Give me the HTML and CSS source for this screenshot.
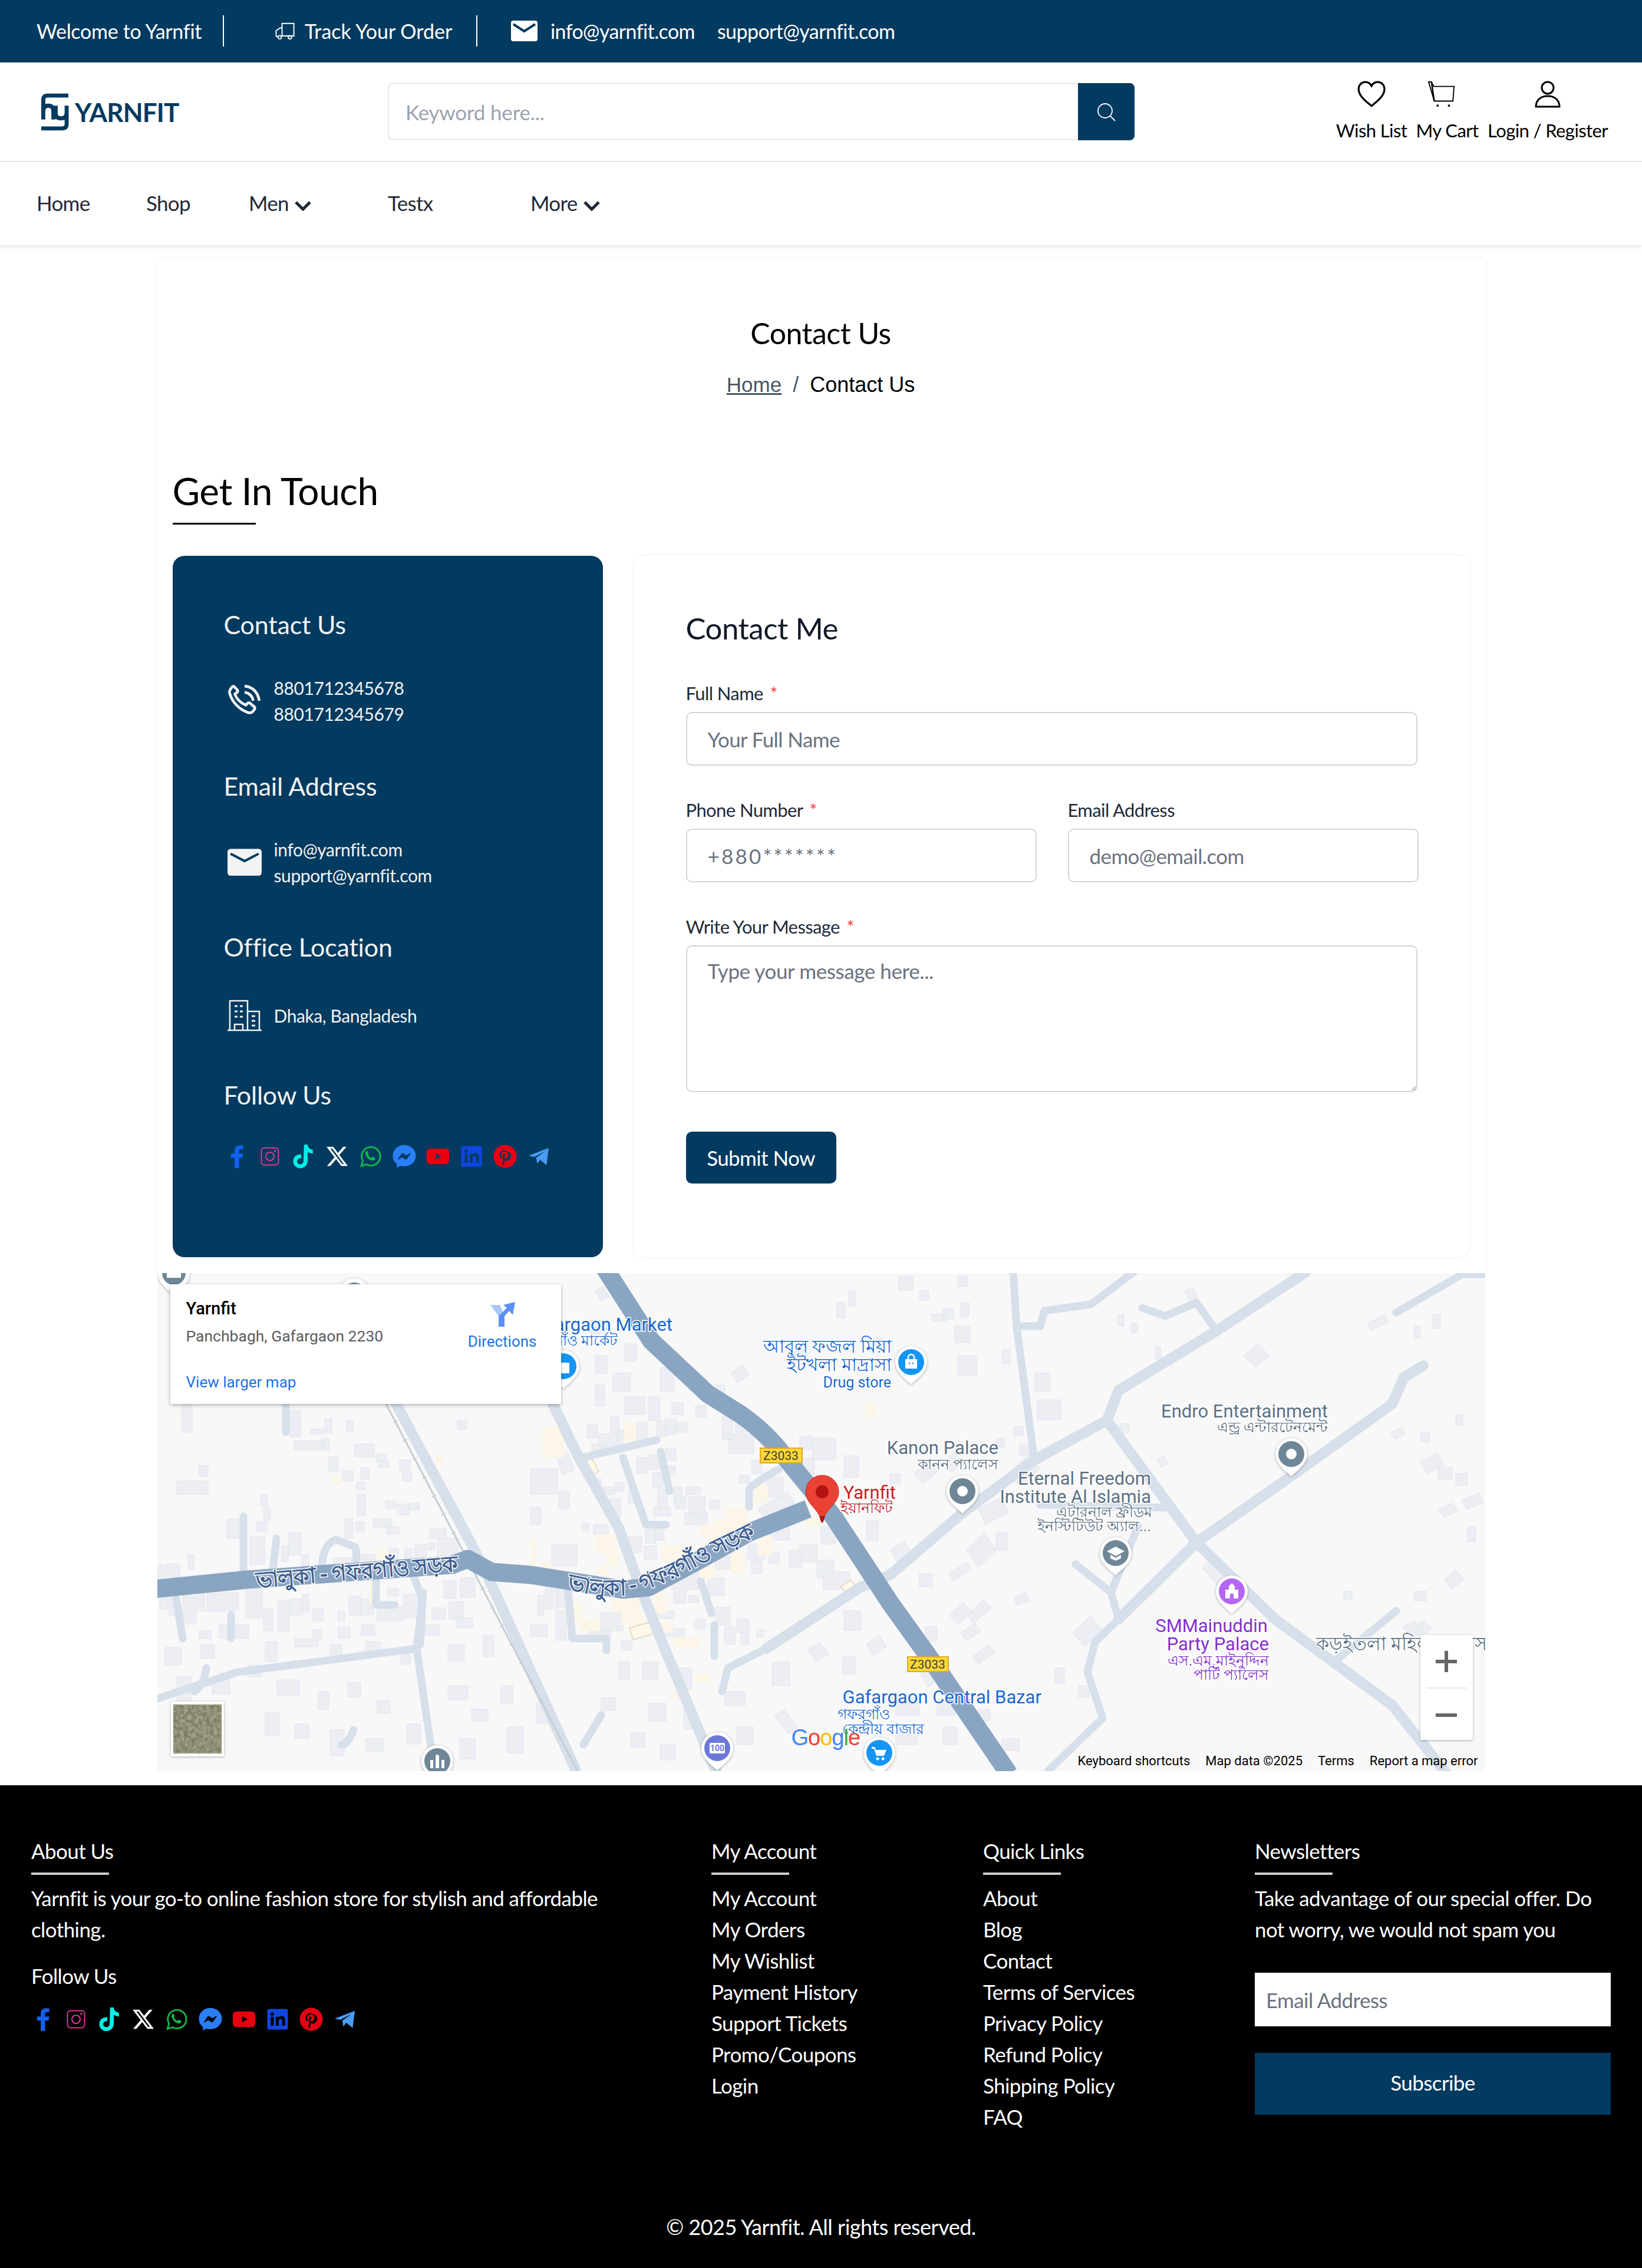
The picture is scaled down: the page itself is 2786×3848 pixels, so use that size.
FILE: index.html
```html
<!DOCTYPE html>
<html lang="en">
<head>
  <meta charset="UTF-8">
  <title>Contact Us - Yarnfit</title>
  <link rel="stylesheet" href="styles.css">
</head>
<body>

<!-- social icon set, used in the contact card and in the footer -->
<svg class="defs" aria-hidden="true">
  <symbol id="i-fb" viewBox="0 0 24 24"><path fill="#1261f0" d="M14.700 24V13.400h3.600l.55-4.200h-4.150V6.600c0-1.200.35-2 2.050-2h2.200V.9C18.500.85 17.200.7 15.700.7 12.500.7 10.300 2.600 10.300 6.200v3H6.500v4.200h3.800V24z"/></symbol>
  <symbol id="i-ig" viewBox="0 0 24 24"><g fill="none" stroke="#e0359b" stroke-width="1.200"><rect x="3.300" y="3.300" width="17.400" height="17.400" rx="3"/><circle cx="12" cy="12" r="4.200"/></g><circle cx="17.400" cy="6.600" r="1.100" fill="#e0359b"/></symbol>
  <symbol id="i-tt" viewBox="0 0 24 24"><path fill="#00f0e8" d="M12.500 0h3.700c.2 1.500.7 2.700 1.500 3.600.9 1 2.100 1.500 3.800 1.600v3.900c-2.100 0-3.900-.6-5.300-1.700v8.700c0 4.500-3.100 7.900-7.500 7.900C4.500 24 1.500 21 1.500 17c0-4.400 3.700-7.500 8.100-7v4c-2.200-.4-4.100 1-4.100 3 0 1.800 1.400 3 3.100 3 2 0 3.400-1.500 3.400-3.500z"/></symbol>
  <symbol id="i-x" viewBox="0 0 24 24"><path fill="#fff" d="M18.200 2.200h3.300l-7.200 8.300 8.500 11.200h-6.600l-5.200-6.800L5 21.800H1.700l7.700-8.900L1.300 2.200h6.800l4.700 6.200zm-1.100 17.600h1.800L7.100 4.100h-2z"/></symbol>
  <symbol id="i-wa" viewBox="0 0 24 24"><path fill="none" stroke="#12b84c" stroke-width="1.700" d="M2.500 21.800l1.500-5.400a9.400 9.400 0 1 1 3.700 3.700z"/><path fill="#12b84c" d="M9 7c-.3-.6-1-.6-1.500-.2-1 1-1.200 2.300-.5 3.800 1.100 2.400 3.300 4.600 6 5.500 1.500.5 2.800 0 3.500-1.200.3-.6.2-1.100-.3-1.400l-1.800-.9c-.4-.2-.8-.1-1 .3l-.6.7c-1.700-.6-3-1.800-3.800-3.400l.6-.7c.2-.3.3-.6.1-1z"/></symbol>
  <symbol id="i-ms" viewBox="0 0 24 24"><path fill="#2a7ff8" fill-rule="evenodd" d="M12 .5C5.500.5.300 5.300.300 11.400c0 3.300 1.500 6.200 4 8.200v3.900l3.600-2c1.300.4 2.600.6 4.100.6 6.500 0 11.700-4.700 11.700-10.700S18.500.5 12 .5zM5.300 14.800l3.900-5.600c.4-.6 1.200-.7 1.700-.3l3 2.100 4-2.400c.3-.2.7.2.500.5l-3.800 5.600c-.4.600-1.200.7-1.700.3l-3-2.100-4.100 2.400c-.3.200-.7-.2-.5-.5z"/></symbol>
  <symbol id="i-yt" viewBox="0 0 24 24"><path fill="#e8000e" fill-rule="evenodd" d="M4.500 4h15a4 4 0 0 1 4 4v8a4 4 0 0 1-4 4h-15a4 4 0 0 1-4-4V8a4 4 0 0 1 4-4zM10 8.800v6.400l5.500-3.200z"/></symbol>
  <symbol id="i-in" viewBox="0 0 24 24"><path fill="#0f46e0" fill-rule="evenodd" d="M3.500 1.500h17a2 2 0 0 1 2 2v17a2 2 0 0 1-2 2h-17a2 2 0 0 1-2-2v-17a2 2 0 0 1 2-2zM5 9.500v9h3v-9zM6.500 5a1.700 1.700 0 1 0 0 3.400 1.700 1.700 0 0 0 0-3.400zM10.200 9.500v9h3v-5c0-1.300.7-2 1.800-2s1.600.8 1.600 2v5h3v-5.500c0-2.900-1.500-4.300-3.700-4.300-1.300 0-2.300.6-2.800 1.400V9.500z"/></symbol>
  <symbol id="i-pt" viewBox="0 0 24 24"><path fill="#e60014" fill-rule="evenodd" d="M12 .3a11.700 11.700 0 1 0 0 23.400 11.700 11.700 0 0 0 0-23.400zM12.300 5.500c-3.700 0-6 2.500-6 5.200 0 1.300.7 2.900 1.800 3.400.3.100.4 0 .5-.3l.2-.8c0-.2 0-.3-.2-.5-.4-.5-.6-1.100-.6-1.800 0-1.900 1.500-3.600 3.900-3.600 2.100 0 3.300 1.300 3.300 3 0 2.300-1 4.200-2.500 4.200-.8 0-1.500-.7-1.300-1.500.3-1 .7-2 .7-2.700 0-.6-.3-1.100-1-1.100-.8 0-1.500.8-1.500 2 0 .7.2 1.200.2 1.200L9.500 18c-.1.800-.1 2.400 0 3.500 1 .2 1.300-1.700 1.800-3.900l.5-2c.3.500 1.100.9 1.900.9 2.500 0 4.300-2.400 4.300-5.300 0-2.400-2.100-4.700-5.700-4.700z"/></symbol>
  <symbol id="i-tg" viewBox="0 0 24 24"><path fill="#4a9df5" d="M1.800 11.300L22.200 3.400 20 20.800 13.500 15.500 10.500 19.500 9.500 13.400 19 6.500 7.500 12.600z"/></symbol>
</svg>

<div class="topbar">
  <span class="top-welcome">Welcome to Yarnfit</span>
  <span class="top-sep"></span>
  <svg class="ico-truck" viewBox="0 0 34 34" fill="none" stroke="#fff" stroke-width="1.700"><path d="M4 26V17l6-4h3V6h18v19H13M4 26h3m6-1H12"/><path d="M13 13v12"/><circle cx="9.500" cy="27" r="2.500"/><circle cx="25" cy="27" r="2.500"/><path d="M15 25h7"/></svg>
  <span class="top-track">Track Your Order</span>
  <span class="top-sep"></span>
  <svg class="ico-mail" viewBox="0 0 45 35"><rect width="45" height="35" rx="4" fill="#fff"/><path d="M4 6l18.500 12L41 6" fill="none" stroke="#033a5f" stroke-width="4"/></svg>
  <span class="top-info">info@yarnfit.com</span>
  <span class="top-info">support@yarnfit.com</span>
</div>

<header class="header">
  <a class="logo">
    <svg class="logo-mark" viewBox="0 0 48 64" fill="none" stroke="#033a5f" stroke-width="7"><path d="M47 3.500H11Q3.500 3.500 3.500 11V45M3.500 31Q3.500 21 12 21 21 21 21 31V45M25 21V34Q25 43 34 43 44 43 44 34M44 21V53Q44 60.500 36 60.500H0"/></svg>
    <span class="logo-text">YARNFIT</span>
  </a>
  <form class="search">
    <input type="text" placeholder="Keyword here...">
    <button type="button" aria-label="Search">
      <svg viewBox="0 0 34 34" fill="none" stroke="#fff" stroke-width="1.800"><circle cx="15" cy="15" r="12"/><path d="M24 24l8 8"/></svg>
    </button>
  </form>
  <div class="user-links">
    <a class="user-link link-wish">
      <svg viewBox="0 0 44 42" fill="none" stroke="#000" stroke-width="3"><path d="M22 39C8 28 2 21 2 13 2 6 7 2 12.500 2 17 2 20 4.500 22 8 24 4.500 27 2 31.500 2 37 2 42 6 42 13 42 21 36 28 22 39z"/></svg>
      <span>Wish List</span>
    </a>
    <a class="user-link link-cart">
      <svg viewBox="0 0 48 48" fill="none" stroke="#000" stroke-width="2"><path d="M1 2h5l4 8h36l-2 26H11Z"/><path d="M6 2l5 34" stroke-width="2.500"/><circle cx="17" cy="44" r="2" fill="#000" stroke="none"/><circle cx="37" cy="44" r="2" fill="#000" stroke="none"/></svg>
      <span>My Cart</span>
    </a>
    <a class="user-link link-login">
      <svg viewBox="0 0 44 46" fill="none" stroke="#000" stroke-width="3"><circle cx="22" cy="12" r="10"/><path d="M2 44c0-11 8-18 20-18s20 7 20 18z"/></svg>
      <span>Login / Register</span>
    </a>
  </div>
</header>

<nav class="nav">
  <a class="nav-home">Home</a>
  <a class="nav-shop">Shop</a>
  <a class="nav-men">Men <svg viewBox="0 0 28 18" fill="none" stroke="#1f2937" stroke-width="5"><path d="M2 3l12 12L26 3"/></svg></a>
  <a class="nav-testx">Testx</a>
  <a class="nav-more">More <svg viewBox="0 0 28 18" fill="none" stroke="#1f2937" stroke-width="5"><path d="M2 3l12 12L26 3"/></svg></a>
</nav>

<main class="page">
  <section class="card">
    <h1 class="page-title">Contact Us</h1>
    <div class="crumbs"><a>Home</a><i>/</i><span>Contact Us</span></div>

    <h2 class="touch-title">Get In Touch</h2>
    <div class="touch-line"></div>

    <div class="contact-row">
      <aside class="info">
        <h3>Contact Us</h3>
        <div class="info-item">
          <svg viewBox="0 0 54 54" fill="none" stroke="#f1f3f5" stroke-width="4.500"><path d="M4 8c-2 2-2 5-1 8 4 13 15 25 29 30 3 1 6 1 8-1l3-4c1-1 1-3 0-4l-7-6c-1-1-3-1-4 0l-3 3C21 31 14 24 11 16l4-3c1-1 1-2 0-4L10 4C9 3 7 3 6 5z" stroke-linejoin="round"/><path d="M27 3c13 1 22 10 24 24M27 13c7 1 13 6 14 14"/></svg>
          <p>8801712345678<br>8801712345679</p>
        </div>
        <h3 class="info-email">Email Address</h3>
        <div class="info-item">
          <svg viewBox="0 0 56 44"><rect width="56" height="44" rx="5" fill="#f1f3f5"/><path d="M5 8l23 12L51 8" fill="none" stroke="#033a5f" stroke-width="4"/></svg>
          <p>info@yarnfit.com<br>support@yarnfit.com</p>
        </div>
        <h3 class="info-office">Office Location</h3>
        <div class="info-item info-single">
          <svg viewBox="0 0 58 54" fill="none" stroke="#f1f3f5" stroke-width="2.500"><path d="M0 52h58M4 52V2h30v50M34 20h20v32"/><path d="M12 52V42h14v10"/><path d="M12 11h5M21 11h5M12 20h5M21 20h5M12 29h5M21 29h5M41 28h6M41 36h6M41 44h6" stroke-width="3"/></svg>
          <p>Dhaka, Bangladesh</p>
        </div>
        <h3 class="info-follow">Follow Us</h3>
        <div class="socials">
          <svg><use href="#i-fb"/></svg><svg><use href="#i-ig"/></svg><svg><use href="#i-tt"/></svg><svg><use href="#i-x"/></svg><svg><use href="#i-wa"/></svg><svg><use href="#i-ms"/></svg><svg><use href="#i-yt"/></svg><svg><use href="#i-in"/></svg><svg><use href="#i-pt"/></svg><svg><use href="#i-tg"/></svg>
        </div>
      </aside>

      <form class="contact-form">
        <h3>Contact Me</h3>
        <div class="field">
          <label>Full Name <b>*</b></label>
          <input type="text" placeholder="Your Full Name">
        </div>
        <div class="field-row">
          <div class="field">
            <label>Phone Number <b>*</b></label>
            <input class="input-phone" type="text" placeholder="+880*******">
          </div>
          <div class="field">
            <label>Email Address</label>
            <input type="text" placeholder="demo@email.com">
          </div>
        </div>
        <div class="field">
          <label>Write Your Message <b>*</b></label>
          <textarea placeholder="Type your message here..."></textarea>
        </div>
        <button type="button" class="submit">Submit Now</button>
      </form>
    </div>
  </section>

  <section class="map">
    <svg class="map-canvas" viewBox="267 2160 2253 845">
      <defs>
        <filter id="sat"><feTurbulence type="fractalNoise" baseFrequency="0.16" numOctaves="3" seed="4"/><feColorMatrix values="0 0 0 0 .42  0 0 0 0 .40  0 0 0 0 .30  1.600 0 0 0 -.35"/></filter>
        <path id="road-a" d="M435 2694L770 2666"/>
        <path id="road-b" d="M962 2696Q1040 2716 1090 2699T1200 2648L1285 2606"/>
        <path id="pin-shape" fill="#fff" d="M0 38C-6 31-27 19-27 0A27 27 0 0 1 27 0C27 19 6 31 0 38z"/>
      </defs>
      <rect x="267" y="2160" width="2253" height="845" fill="#f8f8f8"/>

      <!-- buildings, west of the marker -->
      <path class="bld" d="M308 2383h18v47h-18zM492 2393h18v45h-18zM551 2407h12v25h-12zM587 2410h12v18h-12zM526 2425h23v8h-23zM499 2445h50v15h-50zM546 2440h12v20h-12zM601 2450h34v22h-34zM558 2472h16v25h-16zM337 2487h16v18h-16zM299 2513h54v22h-54zM581 2495h18v18h-18zM612 2490h14v20h-14zM604 2515h16v12h-16zM606 2535h14v37h-14zM442 2537h12v17h-12zM447 2557h12v23h-12zM385 2577h20v33h-20zM435 2582h18v17h-18zM654 2547h18v12h-18zM674 2552h20v18h-20zM696 2550h16v12h-16zM678 2477h18v20h-18zM683 2498h16v15h-16zM638 2467h18v13h-18zM642 2478h18v12h-18zM776 2410h16v15h-16zM585 2577h14v33h-14zM604 2582h14v17h-14zM633 2577h32v15h-32zM656 2590h21v13h-21zM729 2593h28v17h-28zM424 2607h25v47h-25zM490 2600h21v38h-21zM478 2622h12v27h-12zM512 2638h12v20h-12zM565 2643h32v13h-32zM612 2637h25v10h-25zM660 2627h16v20h-16zM687 2627h12v20h-12zM703 2620h20v23h-20zM726 2618h12v12h-12zM742 2610h36v33h-36zM267 2655h11v22h-11zM281 2653h24v23h-24zM319 2638h10v25h-10z"/>
      <path class="bld" d="M271 2710h14v20h-14zM287 2708h12v33h-12zM310 2708h23v47h-23zM335 2705h12v28h-12zM351 2703h54v30h-54zM417 2695h28v50h-28zM447 2730h16v37h-16zM471 2715h20v53h-20zM492 2713h21v27h-21zM513 2705h11v30h-11zM530 2730h18v20h-18zM574 2733h11v18h-11zM592 2708h20v33h-20zM613 2713h21v27h-21zM640 2727h43v23h-43zM658 2695h18v13h-18zM685 2705h25v40h-25zM733 2728h23v20h-23zM762 2718h25v30h-25zM774 2745h28v17h-28zM753 2682h21v30h-21zM781 2677h25v33h-25zM721 2757h25v17h-25zM613 2757h23v17h-23zM530 2765h16v15h-16zM338 2767h20v13h-20zM372 2757h50v23h-50zM574 2760h20v20h-20zM280 2795h28v30h-28zM340 2790h24v24h-24zM450 2785h20v34h-20zM500 2780h40v14h-40zM560 2790h20v28h-20zM620 2785h26v20h-26zM680 2800h16v24h-16zM760 2790h28v28h-28zM820 2775h18v36h-18zM300 2845h24v44h-24zM360 2850h30v24h-30zM420 2825h24v20h-24zM470 2850h38v26h-38zM540 2870h18v30h-18zM590 2855h22v24h-22zM640 2885h22v22h-22zM450 2905h24v40h-24zM500 2925h24v24h-24zM560 2935h24v44h-24zM620 2950h30v22h-30zM690 2925h24v34h-24zM760 2860h34v24h-34zM800 2900h28v20h-28zM850 2860h20v30h-20zM780 2950h26v34h-26zM860 2930h28v44h-28zM910 2890h20v34h-20z"/>
      <!-- buildings, around the junction -->
      <path class="bld" d="M900 2492h46v43h-46zM943 2472l20-8 12 30-20 8zM948 2530h18v30h-18zM900 2557h18v30h-18zM936 2620h43v37h-43zM1007 2510h14v20h-14zM1023 2523h20v13h-20zM1043 2515h16v15h-16zM996 2417h18v23h-18zM1016 2433h18v23h-18zM1036 2403h14v50h-14zM1046 2427h18v33h-18zM1080 2413h18v33h-18zM1114 2410h18v27h-18zM1129 2407h18v27h-18zM1148 2413h18v17h-18zM1004 2450h21v15h-21zM1080 2473h18v27h-18zM1100 2468h20v25h-20zM1129 2458h18v20h-18zM1130 2487h16v15h-16zM1107 2498h18v27h-18zM1116 2528h16v30h-16zM1066 2527h14v23h-14zM1143 2523h14v27h-14zM1146 2540h18v20h-18zM1164 2523h25v13h-25zM1168 2540h29v33h-29zM1161 2567h39v20h-39zM1204 2545h16v15h-16zM1109 2557h29v15h-29zM1032 2543h21v33h-21zM1007 2587h25v17h-25zM987 2585h12v12h-12zM1064 2607h25v27h-25zM1095 2595h18v23h-18zM1111 2590h16v23h-16zM1093 2623h21v23h-21zM1300 2507h29v33h-29zM1286 2560l50-30 14 22-50 30zM1275 2477h18v23h-18zM1254 2503h18v13h-18zM1236 2433h43v33h-43zM1225 2403h18v40h-18zM1248 2410h21v20h-21zM1357 2437h21v23h-21zM1379 2440h39v37h-39zM1350 2473h32v30h-32zM1432 2470h25v37h-25zM1214 2640h25v23h-25zM1268 2620h29v27h-29zM1275 2647h18v23h-18zM1304 2633h18v20h-18zM1307 2590h32v23h-32zM1339 2630h21v30h-21zM1357 2620h29v30h-29zM1386 2647h29v30h-29zM1393 2590h25v30h-25zM1396 2667h46v30h-46zM1432 2733h29v33h-29zM1139 2667h46v30h-46zM1143 2700h21v20h-21zM1168 2707h18v12h-18zM1179 2747h18v17h-18zM1200 2677h29v30h-29zM1214 2727h25v30h-25zM1250 2747h21v23h-21zM1284 2765h12v12h-12zM1229 2760h18v30h-18zM1257 2770h14v20h-14zM925 2687h21v43h-21zM946 2690h16v37h-16zM912 2707h11v33h-11zM943 2733h18v50h-18zM900 2757h29v20h-29zM1018 2737h39v30h-39zM1000 2763h36v17h-36zM1111 2733h32v13h-32zM1125 2763h36v13h-36zM1054 2783h18v17h-18z"/>
      <path class="bld" d="M920 2230h30v24h-30zM1010 2190l14-8 10 18-14 8zM1000 2240h30v22h-30zM1010 2300h20v30h-20zM1060 2280h20v30h-20zM1040 2330h30v30h-30zM1010 2350h16v36h-16zM1120 2320h24v40h-24zM1170 2330h16v30h-16zM1060 2370h34v30h-34zM1100 2370h20v40h-20zM1140 2380h20v20h-20zM1180 2385h18v20h-18zM1210 2350h20v20h-20zM1240 2330l20-14 12 16-20 14zM1340 2300l20-16 10 14-20 14zM1420 2210h14v26h-14zM1440 2190h12v26h-12zM1480 2270h20v20h-20z"/>
      <path class="bld" d="M1050 2820h18v30h-18zM1020 2880h24v22h-24zM1090 2820h26v30h-26zM1150 2830h24v36h-24zM1100 2890h30v30h-30zM1070 2940h24v24h-24zM1120 2960h26v26h-26zM1160 2900h16v34h-16zM1250 2930h28v30h-28zM1310 2820h30v40h-30zM1230 2870h34v24h-34zM1330 2900l24 30-16 12-24-30zM1370 2800l20-14 16 20-20 14zM1430 2810h22v30h-22zM1470 2790l22-16 12 20-22 16zM1520 2880h40v30h-40zM1590 2890h30v20h-30zM1520 2930h36v30h-36zM1600 2930h24v30h-24zM1560 2840l30-20 14 22-30 20zM1660 2900h20v20h-20zM1700 2950h30v20h-30z"/>
      <!-- buildings, east of the marker -->
      <path class="bld" d="M1525 2165h24v24h-24zM1560 2190h16v16h-16zM1580 2230h26v12h-26zM1625 2165h16v18h-16zM1600 2220h18v18h-18zM1630 2210h14v24h-14zM1620 2250h26v28h-26zM1625 2300h32v34h-32zM1700 2290h14v24h-14zM1756 2330h26v30h-26zM1760 2375h40v34h-40zM1720 2420h16v16h-16zM1730 2450h16v20h-16zM2010 2190l14-6 8 20-14 6zM2110 2300l24-20 20 20-24 20zM2320 2245l30-14 6 12-30 14zM2400 2250h10v20h-10zM2430 2230h14v24h-14zM1897 2230h10v20h-10zM1920 2245h10v16h-10zM1960 2285h10v20h-10zM1975 2305h14v12h-14zM2470 2400h12v18h-12zM2410 2430h16v16h-16zM2360 2430l18-8 6 12-18 8zM2410 2480l30-14 10 20-30 14zM2440 2490h24v20h-24zM2470 2500h20v20h-20zM2480 2545l30-12 8 16-30 12zM2440 2560l24-10 10 14-24 10zM2490 2590h14v26h-14zM2400 2700h20v16h-20zM2450 2680l20-16 14 16-20 16zM2400 2760l16-12 14 14-16 14zM2470 2800h18v14h-18zM1900 2415h16v16h-16zM1970 2490l-8-14 12-6 8 14zM1510 2500h18v18h-18zM1550 2500l24-20 16 18-24 20zM1610 2540l26-24 20 30-26 24zM1690 2440h14v16h-14zM1710 2500l34-30 20 22-34 30zM1600 2480l20-16 14 18-20 16zM1660 2560l40-20 12 26-40 20zM1690 2600h20v30h-20zM1640 2630l30-30 20 30-30 30zM1470 2580h20v34h-20zM1510 2630l24-16 14 22-24 16zM1560 2670h22v22h-22zM1610 2670l30-20 8 12-30 20zM1640 2740l30-26 12 14-30 26zM1650 2810l28-20 10 14-28 20zM1610 2740l24-22 16 16-24 22zM1630 2770l24-16 10 14-24 16zM1570 2760h20v24h-20zM1720 2710l20-8 6 14-20 8zM1820 2770l30-28 20 24-30 28zM1790 2830h16v26h-16zM1830 2860h18v20h-18zM2040 2660l22-24 22 30-18 24zM2280 2700h14v14h-14zM2380 2760l20-10 14 20-20 10z"/>
      <path class="bld-y" d="M921 2420h36v53h-36zM1059 2413h21v40h-21zM1011 2603h36v33h-36zM1029 2630h21v27h-21zM1121 2623h39v27h-39zM1189 2587h25v23h-25zM1211 2577h25v30h-25zM1232 2557h36v40h-36zM1279 2520h25v30h-25zM1364 2573h29v17h-29zM1286 2607h25v33h-25zM1239 2633h25v37h-25zM1186 2657h25v23h-25zM1111 2693h18v30h-18zM1061 2703h25v33h-25zM1036 2703h25v33h-25zM970 2717h18v37h-18zM982 2747h36v20h-36zM1054 2737h39v20h-39zM1107 2720h25v17h-25zM1121 2753h21v17h-21zM1143 2777h46v20h-46zM918 2650h18v17h-18zM1011 2657h21v17h-21zM900 2610h11v50h-11zM640 2630h16v20h-16zM627 2680h14v40h-14zM564 2505h16v14h-16zM738 2470h14v18h-14zM1468 2380h18v26h-18zM1090 2230h18v28h-18zM1140 2870h26v14h-26zM1180 2840h24v14h-24zM1670 2960l20-10 10 20-20 10zM1650 2930l16-10 10 18-16 10z"/>
      <path class="bld-o" d="M1068 2762l36-10 6 20-36 10zM1427 2692l16-12 10 12-16 12zM990 2482l14-8 12 22-14 8z"/>

      <!-- minor roads -->
      <g class="roads">
        <path d="M671 2380L800 2620 830 2680 980 3010"/>
        <path d="M938 2382L979 2467 1050 2593 1086 2693 1129 2800 1217 3010"/>
        <path d="M1300 2797L1460 2693 1510 2672 1633 2567 1755 2477 1878 2410 1898 2359 2064 2258 2216 2158"/>
        <path d="M1878 2410L2030 2617 2163 2747 2362 2893 2455 3010"/>
        <path d="M1898 2747L2030 2617 2190 2505 2362 2382 2382 2337 2415 2317"/>
      </g>
      <g class="roads roads-thin">
        <path d="M267 2882L403 2837 707 2797M718 2702L707 2797 738 3010M310 2780L299 2713M392 2780V2740M485 2380V2430M413 2573V2670M469 2610L463 2663M546 2657Q548 2620 570 2612L603 2625Q606 2635 604 2647M638 2680V2723H670M701 2673L717 2713 713 2790M350 2830Q345 2860 330 2870M600 2935Q590 2960 580 2960"/>
        <path d="M989 2473L1114 2443M1057 2473L1096 2587H1130M1121 2463L1136 2530M1271 2557V2527Q1280 2515 1321 2493M964 2700L971 2780H1029V2800M1189 2683L1207 2737M1212 2757V2810M1300 2797L1235 2830 1225 2870M990 2960L1020 2910"/>
        <path d="M1719 2158L1725 2252 1755 2477M1725 2250H1765L1772 2224 1851 2213 1924 2158M1938 2219L1977 2233 2030 2210 2064 2258M2369 2227L2481 2162H2521"/>
        <path d="M1898 2747L1858 2786 1845 2837 1871 2915 1778 3005M1825 2654L1885 2702 1898 2747M1885 2702L1931 2589M1765 2553L1984 2558M2263 2820L2369 2733"/>
      </g>
      <path class="rail" d="M654 2380L790 2640 980 3005"/>
      <path class="rail-ticks" d="M654 2380L790 2640 980 3005"/>

      <!-- main roads -->
      <g class="roads-main">
        <path d="M260 2696L420 2680 767 2655 794 2645 834 2667 900 2672 964 2682 1057 2697 1100 2693 1186 2647 1271 2600 1371 2560"/>
        <path d="M1025 2150L1105 2275 1201 2365 1257 2400Q1300 2430 1330 2470L1414 2573 1510 2719 1586 2825 1712 3010"/>
      </g>

      <!-- road names -->
      <text class="road-label"><textPath href="#road-a">ভালুকা - গফরগাঁও সড়ক</textPath></text>
      <text class="road-label"><textPath href="#road-b">ভালুকা - গফরগাঁও সড়ক</textPath></text>

      <!-- shields -->
      <g class="shield"><rect x="1290" y="2457" width="71" height="25"/><text x="1325" y="2477">Z3033</text></g>
      <g class="shield"><rect x="1540" y="2811" width="69" height="25"/><text x="1574" y="2831">Z3033</text></g>

      <!-- place labels -->
      <g class="lbl lbl-blue">
        <text x="1141" y="2258">Gafargaon Market</text>
        <text class="sm" x="1048" y="2283">গফরগাঁও মার্কেট</text>
        <text class="lg" x="1513" y="2295">আবুল ফজল মিয়া</text>
        <text class="lg" x="1513" y="2326">ইটখলা মাদ্রাসা</text>
        <text class="sm" x="1512" y="2354">Drug store</text>
        <text x="1767" y="2890">Gafargaon Central Bazar</text>
        <text class="sm" x="1510" y="2917">গফরগাঁও</text>
        <text class="sm" x="1568" y="2942">কেন্দ্রীয় বাজার</text>
      </g>
      <g class="lbl lbl-grey">
        <text x="1694" y="2467">Kanon Palace</text>
        <text class="sm" x="1694" y="2493">কানন প্যালেস</text>
        <text x="2253" y="2405">Endro Entertainment</text>
        <text class="sm" x="2253" y="2430">এন্ড্র এন্টারটেনমেন্ট</text>
        <text x="1953" y="2519">Eternal Freedom</text>
        <text x="1953" y="2550">Institute Al Islamia</text>
        <text class="sm" x="1955" y="2574">এটারনাল ফ্রীডম</text>
        <text class="sm" x="1953" y="2598">ইনস্টিটিউট অ্যাল...</text>
      </g>
      <text class="lbl-tail" x="2233" y="2800">কড়ইতলা মহিলা মাদ্রাসা</text>
      <g class="lbl lbl-purple">
        <text x="2151" y="2769">SMMainuddin</text>
        <text x="2153" y="2800">Party Palace</text>
        <text class="sm" x="2153" y="2826">এস.এম.মাইনুদ্দিন</text>
        <text class="sm" x="2153" y="2850">পার্টি প্যালেস</text>
      </g>
      <g class="lbl lbl-red">
        <text x="1520" y="2543">Yarnfit</text>
        <text class="sm" x="1515" y="2567">ইয়ানফিট</text>
      </g>

      <!-- pins -->
      <g class="pin" fill="#6f8696" transform="translate(295 2160)"><use href="#pin-shape"/><circle r="20"/><path fill="#fff" d="M-12 8V-2h6v-6h12v6h6V8z"/></g>
      <g class="pin" fill="#6f8696" transform="translate(601 2196)"><use href="#pin-shape"/><circle r="20"/><path fill="#fff" d="M0-12L12 0V10H-12V0z"/></g>
      <g class="pin" fill="#1595f2" transform="translate(956 2318)"><use href="#pin-shape"/><circle r="22"/><path fill="#fff" d="M-10-6H10V12H-10z"/></g>
      <g class="pin" fill="#1595f2" transform="translate(1546 2311)"><use href="#pin-shape"/><circle r="22"/><path fill="#fff" d="M-10-5H10V11H-10z"/><path d="M-5-5V-8A5 5 0 0 1 5-8V-5" fill="none" stroke="#fff" stroke-width="2.500"/><circle cx="-3" cy="2" r="1.400"/><circle cx="3" cy="2" r="1.400"/></g>
      <g class="pin" fill="#6f8696" transform="translate(1633 2530)"><use href="#pin-shape"/><circle r="22"/><circle r="9" fill="#fff"/></g>
      <g class="pin" fill="#6f8696" transform="translate(2191 2467)"><use href="#pin-shape"/><circle r="22"/><circle r="9" fill="#fff"/></g>
      <g class="pin" fill="#6f8696" transform="translate(1893 2635)"><use href="#pin-shape"/><circle r="22"/><path fill="#fff" d="M0-11L15-3 0 5-15-3zM-9 3L0 8 9 3V9L0 13-9 9z"/></g>
      <g class="pin" fill="#b466f5" transform="translate(2090 2700)"><use href="#pin-shape"/><circle r="22"/><path fill="#fff" d="M-11 12V-3H-5V-9L0-14 5-9V-3H11V12H3V4H-3V12z"/></g>
      <g class="pin" fill="#6b78d8" transform="translate(1217 2966)"><use href="#pin-shape"/><circle r="22"/><rect x="-13" y="-9" width="26" height="18" rx="2" fill="#fff"/><text class="pin-txt" y="5">100</text></g>
      <g class="pin" fill="#1595f2" transform="translate(1492 2974)"><use href="#pin-shape"/><circle r="22"/><path fill="#fff" d="M-13-10H-8L-6-5H12L8 5H-5L-9-7H-13z"/><circle cx="-3" cy="10" r="2.500" fill="#fff"/><circle cx="6" cy="10" r="2.500" fill="#fff"/></g>
      <g class="pin" fill="#6f8696" transform="translate(742 2988)"><use href="#pin-shape"/><circle r="22"/><path fill="#fff" d="M-12 12V-2h5V12zM-3 12V-8A3 3 0 0 1 3-8V12zM7 12V-2h5V12z"/></g>

      <!-- marker -->
      <path fill="#ea4335" stroke="#c5221f" stroke-width="1" d="M1395 2584C1389 2558 1367 2552 1367 2531A28 28 0 0 1 1423 2531C1423 2552 1401 2558 1395 2584z"/>
      <path fill="#b31412" d="M1390 2572h10l-3 10h-4z"/>
      <circle cx="1395" cy="2531" r="11" fill="#b31412"/>
    </svg>

    <div class="map-info">
      <div class="map-info-text">
        <strong>Yarnfit</strong>
        <span>Panchbagh, Gafargaon 2230</span>
        <a>View larger map</a>
      </div>
      <div class="map-dir">
        <svg viewBox="0 0 44 44"><path fill="#a7c7fa" d="M2 5H18L26 22V42H16V24z"/><path fill="#5b8ff5" d="M16 42V24L30 10 24 5 44 0 40 22 34 15 26 24V42z"/></svg>
        <span>Directions</span>
      </div>
    </div>

    <div class="map-zoom">
      <svg viewBox="0 0 40 40"><path fill="#666" d="M17 2h6v15h15v6H23v15h-6V23H2v-6h15z"/></svg>
      <hr>
      <svg viewBox="0 0 40 40"><path fill="#666" d="M2 17h36v6H2z"/></svg>
    </div>

    <div class="map-sat"><svg viewBox="0 0 82 82"><rect width="82" height="82" fill="#76795c"/><rect width="82" height="82" filter="url(#sat)"/></svg></div>

    <div class="map-google"><span class="g-b">G</span><span class="g-r">o</span><span class="g-y">o</span><span class="g-b">g</span><span class="g-g">l</span><span class="g-r">e</span></div>

    <div class="map-credit">
      <span>Keyboard shortcuts</span><span>Map data ©2025</span><span>Terms</span><span>Report a map error</span>
    </div>
  </section>
</main>

<footer class="footer">
  <div class="footer-grid">
    <div>
      <h4>About Us</h4>
      <p>Yarnfit is your go-to online fashion store for stylish and affordable clothing.</p>
      <p class="footer-follow">Follow Us</p>
      <div class="socials">
        <svg><use href="#i-fb"/></svg><svg><use href="#i-ig"/></svg><svg><use href="#i-tt"/></svg><svg><use href="#i-x"/></svg><svg><use href="#i-wa"/></svg><svg><use href="#i-ms"/></svg><svg><use href="#i-yt"/></svg><svg><use href="#i-in"/></svg><svg><use href="#i-pt"/></svg><svg><use href="#i-tg"/></svg>
      </div>
    </div>
    <div>
      <h4>My Account</h4>
      <a>My Account</a><a>My Orders</a><a>My Wishlist</a><a>Payment History</a><a>Support Tickets</a><a>Promo/Coupons</a><a>Login</a>
    </div>
    <div>
      <h4>Quick Links</h4>
      <a>About</a><a>Blog</a><a>Contact</a><a>Terms of Services</a><a>Privacy Policy</a><a>Refund Policy</a><a>Shipping Policy</a><a>FAQ</a>
    </div>
    <div>
      <h4>Newsletters</h4>
      <p>Take advantage of our special offer. Do not worry, we would not spam you</p>
      <input class="news-input" type="text" placeholder="Email Address">
      <button type="button" class="news-btn">Subscribe</button>
    </div>
  </div>
  <p class="copyright">© 2025 Yarnfit. All rights reserved.</p>
</footer>

</body>
</html>
```

FILE: styles.css
```css
/* base */
* {
  box-sizing: border-box;
}

body {
  margin: 0;
  background: #fff;
  color: #000;
  font-family: "Lato", "Open Sans", sans-serif;
  font-size: 33px;
  letter-spacing: -0.6px;
}

h1, h2, h3, h4, p {
  margin: 0;
  font-weight: 400;
}

input, textarea, button {
  font-family: inherit;
  letter-spacing: inherit;
}

.defs {
  position: absolute;
  width: 0;
  height: 0;
}

/* top bar */
.topbar {
  display: flex;
  align-items: center;
  height: 106px;
  padding-left: 62px;
  padding-bottom: 2px;
  background: #033a5f;
  color: #fff;
  font-size: 34px;
  letter-spacing: -0.3px;
}

.top-sep {
  width: 2px;
  height: 53px;
  background: #fff;
}

.top-welcome {
  width: 316px;
}

.ico-truck {
  width: 38px;
  height: 38px;
  margin-left: 84px;
  margin-right: 15px;
}

.top-track {
  width: 291px;
  letter-spacing: 0;
}

.ico-mail {
  width: 45px;
  height: 35px;
  margin-left: 57px;
  margin-right: 22px;
}

.top-info {
  width: 283px;
  letter-spacing: -0.6px;
}

/* header */
.header {
  display: flex;
  align-items: center;
  height: 169px;
  padding-left: 70px;
  border-bottom: 2px solid #e5e7eb;
}

.logo {
  display: flex;
  align-items: center;
  width: 588px;
}

.logo-mark {
  width: 47px;
  height: 64px;
}

.logo-text {
  margin-left: 10px;
  color: #033a5f;
  font-size: 44px;
  font-weight: 700;
  letter-spacing: -0.8px;
}

.search {
  display: flex;
  width: 1267px;
  height: 97px;
}

.search input {
  flex: 1;
  min-width: 0;
  padding: 0 28px;
  border: 2px solid #e5e7eb;
  border-right: 0;
  border-radius: 8px 0 0 8px;
  font-size: 35px;
  letter-spacing: -0.2px;
  outline: none;
}

.search input::placeholder {
  color: #9ca3af;
}

.search button {
  width: 96px;
  padding: 0;
  border: 0;
  border-radius: 0 8px 8px 0;
  background: #033a5f;
}

.search svg {
  display: block;
  width: 34px;
  height: 34px;
  margin: 0 auto;
}

.user-links {
  display: flex;
  margin-left: 343px;
}

.user-link {
  display: flex;
  flex-direction: column;
  align-items: center;
  font-size: 31px;
  white-space: nowrap;
}

.user-link svg {
  height: 46px;
}

.user-link span {
  margin-top: 16px;
  line-height: 44px;
}

.link-wish {
  width: 118px;
}

.link-cart {
  width: 101px;
  margin-left: 19px;
}

.link-cart svg {
  margin-right: 20px;
}

.link-login {
  width: 210px;
  margin-left: 15px;
}

/* nav */
.nav {
  display: flex;
  align-items: center;
  height: 141px;
  padding-left: 62px;
  padding-bottom: 3px;
  background: #fff;
  box-shadow: 0 3px 6px rgba(0, 0, 0, 0.1);
  color: #1f2937;
  font-size: 35px;
  letter-spacing: -0.7px;
}

.nav svg {
  width: 28px;
  height: 18px;
  margin-left: 2px;
}

.nav-home { width: 186px; }
.nav-shop { width: 174px; }
.nav-men { width: 236px; }
.nav-testx { width: 242px; }

/* contact card */
.page {
  padding: 24px 0;
}

.card {
  width: 2253px;
  height: 1720px;
  margin: 0 auto;
  padding: 95px 27px 0 26px;
  box-shadow: 0 0 8px rgba(0, 0, 0, 0.06);
  border-radius: 8px 8px 0 0;
}

.page-title {
  font-size: 50px;
  line-height: 60px;
  letter-spacing: -0.5px;
  text-align: center;
}

.crumbs {
  display: flex;
  justify-content: center;
  margin-top: 36px;
  font-family: "Liberation Sans", Arial, sans-serif;
  font-size: 36px;
  line-height: 44px;
  letter-spacing: 0;
}

.crumbs a {
  color: #4b5563;
  font-size: 35px;
  text-decoration: underline;
}

.crumbs i {
  margin: 0 19px;
  color: #4b5563;
  font-style: normal;
}

.touch-title {
  margin-top: 113px;
  font-size: 64px;
  line-height: 90px;
  letter-spacing: -0.5px;
}

.touch-line {
  width: 141px;
  height: 3px;
  margin-top: 9px;
  background: #000;
}

.contact-row {
  display: flex;
  gap: 53px;
  margin-top: 53px;
}

/* left info panel */
.info {
  width: 730px;
  height: 1190px;
  padding: 87px 0 0 87px;
  border-radius: 20px;
  background: #033a5f;
  color: #f1f3f5;
}

.info h3 {
  font-size: 43px;
  line-height: 60px;
  letter-spacing: -0.2px;
}

.info-item {
  display: flex;
  align-items: center;
  margin-top: 55px;
}

.info-item svg {
  width: 58px;
  height: 56px;
  margin-left: 6px;
  margin-right: 21px;
}

.info-item p {
  font-size: 30px;
  line-height: 44px;
  letter-spacing: -0.4px;
}

.info .info-email { margin-top: 71px; }
.info .info-office { margin-top: 70px; }
.info .info-follow { margin-top: 77px; }
.info .info-single { margin-top: 58px; }

.socials {
  display: flex;
  gap: 17px;
  margin-top: 54px;
  margin-left: 1px;
}

.socials svg {
  width: 40px;
  height: 40px;
  flex: none;
}

/* form */
.contact-form {
  width: 1417px;
  height: 1190px;
  padding: 92px 88px 0;
  border-radius: 16px;
  background: #fff;
  box-shadow: 0 0 6px rgba(0, 0, 0, 0.07);
}

.contact-form h3 {
  margin-bottom: 57px;
  color: #111827;
  font-size: 51px;
  line-height: 62px;
  letter-spacing: -0.5px;
}

.field {
  margin-bottom: 53px;
}

.field label {
  display: block;
  margin-bottom: 10px;
  color: #1f2937;
  font-size: 31px;
  line-height: 44px;
}

.field b {
  margin-left: 4px;
  color: #ef4444;
  font-weight: 400;
}

.field input, .field textarea {
  display: block;
  width: 100%;
  height: 91px;
  padding: 0 35px;
  border: 2px solid #d1d5db;
  border-radius: 10px;
  background: #fff;
  font-size: 35px;
  outline: none;
}

.field .input-phone {
  letter-spacing: 3.2px;
}

.field textarea {
  height: 249px;
  padding-top: 20px;
  letter-spacing: -0.4px;
}

::placeholder {
  color: #6b7280;
  opacity: 1;
}

.field-row {
  display: grid;
  grid-template-columns: 595px 595px;
  gap: 53px;
}

.submit {
  width: 255px;
  height: 88px;
  margin-top: 14px;
  padding: 0;
  border: 0;
  border-radius: 10px;
  background: #033a5f;
  color: #fff;
  font-size: 35px;
}

/* map */
.map {
  position: relative;
  width: 2253px;
  height: 845px;
  margin: 0 auto;
  overflow: hidden;
  font-family: "Roboto", sans-serif;
  letter-spacing: 0;
}

.map-canvas {
  display: block;
  width: 2253px;
  height: 845px;
}

.bld {
  fill: #eceef3;
  stroke: #e2e5ee;
  stroke-width: 1;
}

.bld-y {
  fill: #fbf6e8;
}

.bld-o {
  fill: #fdf8ea;
  stroke: #e6dcc0;
  stroke-width: 2;
}

.roads path {
  fill: none;
  stroke: #d6dfea;
  stroke-width: 18;
  stroke-linecap: round;
  stroke-linejoin: round;
}

.roads-thin path {
  stroke-width: 13;
}

.rail {
  fill: none;
  stroke: #c6cdd4;
  stroke-width: 3;
}

.rail-ticks {
  fill: none;
  stroke: #c6cdd4;
  stroke-width: 9;
  stroke-dasharray: 1.500 34;
}

.roads-main path {
  fill: none;
  stroke: #8aa5c2;
  stroke-width: 31;
  stroke-linejoin: round;
}

.road-label {
  fill: #3f5f92;
  stroke: #fff;
  stroke-width: 3px;
  paint-order: stroke;
  font-size: 38px;
  font-weight: 700;
  letter-spacing: -1.500px;
}

.shield rect {
  fill: #fdd835;
  stroke: #e0a92b;
  stroke-width: 2;
}

.shield text {
  fill: #3c3c3c;
  font-size: 21px;
  text-anchor: middle;
}

.lbl text {
  font-size: 31px;
  text-anchor: end;
  stroke: #fff;
  stroke-width: 3px;
  paint-order: stroke;
}

.lbl .sm {
  font-size: 25px;
}

.lbl .lg {
  font-size: 31px;
}

.lbl-blue text { fill: #1967d2; }
.lbl-grey text { fill: #5b7083; }
.lbl-purple text { fill: #8430ce; }
.lbl-red text { fill: #c5221f; }

.lbl-tail {
  fill: #5b7083;
  font-size: 32px;
  stroke: #fff;
  stroke-width: 3px;
  paint-order: stroke;
}

.pin use {
  filter: drop-shadow(0 1px 2px rgba(0, 0, 0, 0.3));
}

.pin-txt {
  fill: #6b78d8;
  font-size: 14px;
  font-weight: 700;
  text-anchor: middle;
}

.map-info {
  position: absolute;
  top: 19px;
  left: 22px;
  display: flex;
  justify-content: space-between;
  width: 663px;
  height: 203px;
  padding: 24px 41px 0 27px;
  background: #fff;
  box-shadow: 0 2px 6px rgba(0, 0, 0, 0.3);
  border-radius: 2px;
}

.map-info-text {
  display: flex;
  flex-direction: column;
}

.map-info-text strong {
  font-size: 29px;
  font-weight: 500;
  line-height: 34px;
}

.map-info-text span {
  margin-top: 14px;
  color: #5b5b5b;
  font-size: 26.500px;
  line-height: 32px;
}

.map-info-text a {
  margin-top: 46px;
  color: #1a73e8;
  font-size: 26px;
  line-height: 32px;
}

.map-dir {
  display: flex;
  flex-direction: column;
  align-items: center;
  color: #1a73e8;
  font-size: 26px;
}

.map-dir svg {
  width: 44px;
  height: 44px;
  margin-top: 6px;
  margin-bottom: 8px;
}

.map-zoom {
  position: absolute;
  top: 614px;
  left: 2143px;
  width: 89px;
  height: 178px;
  padding-top: 25px;
  background: #fff;
  box-shadow: 0 1px 4px rgba(0, 0, 0, 0.3);
}

.map-zoom svg {
  display: block;
  width: 40px;
  height: 40px;
  margin: 0 auto;
}

.map-zoom hr {
  width: 68px;
  height: 2px;
  margin: 24px auto 25px;
  border: 0;
  background: #e6e6e6;
}

.map-sat {
  position: absolute;
  top: 727px;
  left: 23px;
  width: 90px;
  height: 93px;
  border: 4px solid #fff;
  box-shadow: 0 1px 4px rgba(0, 0, 0, 0.3);
  border-radius: 3px;
  overflow: hidden;
}

.map-sat svg {
  display: block;
  width: 100%;
  height: 100%;
}

.map-google {
  position: absolute;
  top: 766px;
  left: 1076px;
  font-family: "Liberation Sans", sans-serif;
  font-size: 38px;
  line-height: 44px;
  letter-spacing: -1px;
}

.g-b { color: #4285f4; }
.g-r { color: #ea4335; }
.g-y { color: #fbbc05; }
.g-g { color: #34a853; }

.map-credit {
  position: absolute;
  right: 12px;
  bottom: 4px;
  display: flex;
  gap: 26px;
  font-size: 22px;
  line-height: 26px;
  color: #000;
}

/* footer */
.footer {
  height: 819px;
  padding: 85px 53px 0;
  background: #000;
  color: #fff;
}

.footer-grid {
  display: grid;
  grid-template-columns: 1154px 461px 461px 604px;
  height: 550px;
}

.footer h4 {
  margin-bottom: 13px;
  font-size: 35px;
  line-height: 53px;
}

.footer h4::after {
  content: "";
  display: block;
  width: 132px;
  height: 4px;
  margin-top: 10px;
  background: #ccc;
}

.footer p {
  font-size: 35px;
  line-height: 53px;
  letter-spacing: -0.6px;
}

.footer-grid > div:first-child p:first-of-type {
  width: 1000px;
}

.footer a {
  display: block;
  font-size: 35px;
  line-height: 53px;
}

.footer .footer-follow {
  margin-top: 26px;
}

.footer .socials {
  margin-top: 27px;
  margin-left: -1px;
}

.news-input {
  display: block;
  width: 604px;
  height: 91px;
  margin-top: 47px;
  padding: 0 19px;
  border: 0;
  background: #fff;
  font-size: 35px;
  outline: none;
}

.news-btn {
  display: block;
  width: 604px;
  height: 105px;
  margin-top: 45px;
  padding-bottom: 6px;
  border: 0;
  background: #033a5f;
  color: #fff;
  font-size: 35px;
}

.footer .copyright {
  margin-top: 88px;
  font-size: 36px;
  letter-spacing: -0.5px;
  text-align: center;
}
```
